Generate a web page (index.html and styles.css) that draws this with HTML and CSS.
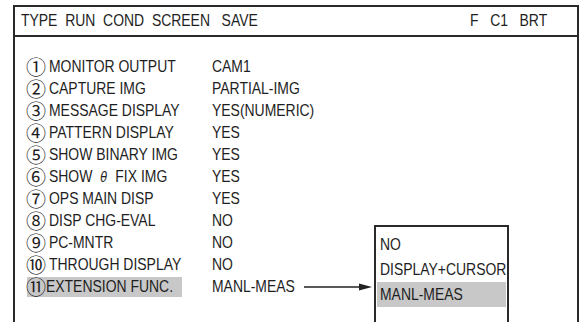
FILE: index.html
```html
<!DOCTYPE html>
<html lang="en">
<head>
    <meta charset="UTF-8">
    <title>Run Cond Screen</title>
    <link rel="stylesheet" href="styles.css">
</head>
<body>
    <div class="screen">
        <div class="header">
            <b class="nar menu">TYPE  RUN  COND  SCREEN   SAVE</b>
            <b class="nar status">F   C1   BRT</b>
        </div>

        <div class="list">
            <div class="row"><div class="key"><span class="num">①</span><b class="nar">MONITOR OUTPUT</b></div><b class="nar">CAM1</b></div>
            <div class="row"><div class="key"><span class="num">②</span><b class="nar">CAPTURE IMG</b></div><b class="nar">PARTIAL-IMG</b></div>
            <div class="row"><div class="key"><span class="num">③</span><b class="nar">MESSAGE DISPLAY</b></div><b class="nar">YES(NUMERIC)</b></div>
            <div class="row"><div class="key"><span class="num">④</span><b class="nar">PATTERN DISPLAY</b></div><b class="nar">YES</b></div>
            <div class="row"><div class="key"><span class="num">⑤</span><b class="nar">SHOW BINARY IMG</b></div><b class="nar">YES</b></div>
            <div class="row"><div class="key"><span class="num">⑥</span><b class="nar">SHOW <i class="theta">θ</i> FIX IMG</b></div><b class="nar">YES</b></div>
            <div class="row"><div class="key"><span class="num">⑦</span><b class="nar">OPS MAIN DISP</b></div><b class="nar">YES</b></div>
            <div class="row"><div class="key"><span class="num">⑧</span><b class="nar">DISP CHG-EVAL</b></div><b class="nar">NO</b></div>
            <div class="row"><div class="key"><span class="num">⑨</span><b class="nar">PC-MNTR</b></div><b class="nar">NO</b></div>
            <div class="row"><div class="key"><span class="num">⑩</span><b class="nar">THROUGH DISPLAY</b></div><b class="nar">NO</b></div>
            <div class="row">
                <div class="key"><div class="selected"><span class="num">⑪</span><b class="nar">EXTENSION FUNC.</b></div></div>
                <b class="nar">MANL-MEAS</b>
                <svg class="arrow" width="68" height="10" viewBox="0 0 68 10"><line x1="0" y1="5" x2="58" y2="5" stroke="#222" stroke-width="1.5"/><polygon points="55,1.5 68,5 55,8.5" fill="#222"/></svg>
            </div>
        </div>

        <ul class="dropdown">
            <li><b class="nar">NO</b></li>
            <li><b class="nar">DISPLAY+CURSOR</b></li>
            <li class="active"><b class="nar">MANL-MEAS</b></li>
        </ul>
    </div>
</body>
</html>
```

FILE: styles.css
```css
body {
    margin: 0;
    background: #fff;
    color: #1e1e1e;
    font-family: "Liberation Sans", Arial, sans-serif;
    font-size: 17px;
    overflow: hidden;
}
.nar {
    display: inline-block;
    font-weight: normal;
    white-space: pre;
    transform: scaleX(0.82);
    transform-origin: 0 50%;
}
.screen {
    position: relative;
    margin: 5px 0 0 13px;
    width: 562px;
    height: 340px;
    border: 2px solid #2a2a2a;
    border-bottom: none;
}
.header {
    height: 28px;
    border-bottom: 2px solid #2a2a2a;
    display: flex;
    align-items: center;
    padding: 0 0 0 6px;
}
.status {
    margin-left: auto;
    width: 107px;
}
.list {
    padding: 19px 0 0 12px;
}
.row {
    display: grid;
    grid-template-columns: 185px 92px auto;
    height: 22px;
    align-items: center;
}
.key {
    display: flex;
    align-items: center;
}
.selected {
    display: flex;
    align-items: center;
    width: 155px;
    height: 20px;
    background: #c8c8c8;
}
.num {
    display: inline-block;
    width: 23px;
    font-family: "Noto Sans CJK JP", "DejaVu Sans", sans-serif;
    font-size: 20px;
    line-height: 20px;
    margin-left: -1px;
}
.theta {
    font-family: "DejaVu Sans", sans-serif;
    font-size: 14px;
    margin: 0 5px;
}
.arrow {
    display: block;
}
.dropdown {
    position: absolute;
    left: 359px;
    top: 218px;
    width: 131px;
    height: 91px;
    margin: 0;
    padding: 5px 0 0;
    list-style: none;
    border: 2px solid #2a2a2a;
}
.dropdown li {
    height: 25px;
    line-height: 25px;
    padding: 0 3px;
    margin: 0 1px;
}
.dropdown .active {
    background: #c8c8c8;
}
```
